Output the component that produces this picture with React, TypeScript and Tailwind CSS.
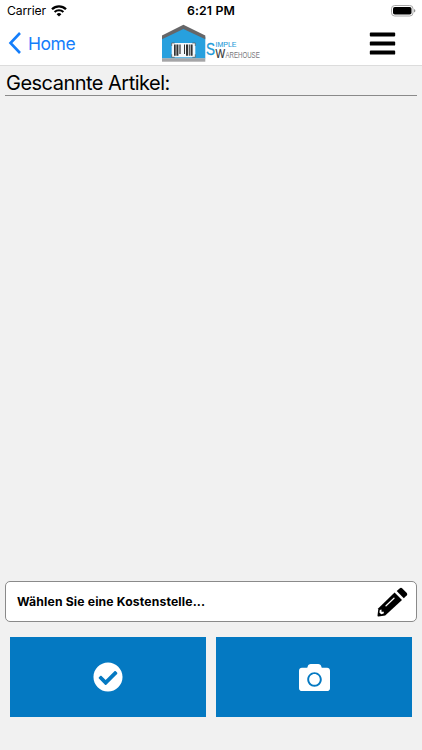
import { FaBars, FaCamera, FaCheckCircle } from "react-icons/fa";

const WifiIcon = () => (
  <svg width="16" height="12" viewBox="0 0 16 12" fill="none" stroke="#000">
    <path d="M1 4.3a10 10 0 0 1 14 0" strokeWidth="2.3" />
    <path d="M3.6 7a6.3 6.3 0 0 1 8.8 0" strokeWidth="2.1" />
    <path d="M8 11.6 5.6 9.2a3.5 3.5 0 0 1 4.8 0z" fill="#000" stroke="none" />
  </svg>
);

const BatteryIcon = () => (
  <svg width="25" height="12" viewBox="0 0 25 12">
    <rect x="0.5" y="0.5" width="21.5" height="10.5" rx="3.2" fill="#fff" stroke="#a8a8a8" />
    <rect x="2" y="2" width="18.5" height="7.5" rx="1.8" fill="#000" />
    <path d="M23.2 4v3.6c1.5-.6 1.5-3 0-3.6z" fill="#777" />
  </svg>
);

const PencilIcon = () => (
  <svg width="31" height="31" viewBox="3 3 31 31" className="mt-[2px]">
    <path
      d="M20.6 8.6 28 16 11.2 31.6 4.5 32.6Q3.4 32.7 3.5 31.6L4.4 24.3z"
      fill="#000"
    />
    <path
      d="M22.7 7 25.6 4.4Q27 3.3 28.3 4.4L32.8 8.9Q33.8 10 32.8 11.3L29.8 14.2z"
      fill="#000"
    />
    <path d="M12 21.8 20 14.2" stroke="#fff" strokeWidth="1.2" strokeLinecap="round" />
    <path d="M5.8 25.9 7.500 25.6V27.8H9.9L9.7 29.5 7.2 30.2 5.4 28.5z" fill="#fff" />
  </svg>
);

const Logo = () => (
  <svg
    width="100"
    height="40"
    viewBox="161 23 100 40"
    className="overflow-visible"
    fontFamily="'Liberation Sans', sans-serif"
  >
    <path d="M162 37 183.4 27 205.3 37V58.5H162z" fill="#27a0de" />
    <path d="M162 35.5 183.4 24.7 205.3 35.5V39.3L183.4 29 162 39.3z" fill="#666668" />
    <rect x="162" y="58.3" width="43.3" height="3.4" fill="#a5a5a7" />
    <rect x="171.7" y="43" width="23.6" height="14.3" fill="#f4f8fa" />
    <path
      d="M171.7 46v-3h3M192.3 43h3v3M195.3 54.3v3h-3M174.7 57.3h-3v-3"
      fill="none"
      stroke="#555"
      strokeWidth="0.7"
    />
    <path
      d="M174 44.4h1.7v11.4H174zM176.4 44.4h2v11.4h-2zM179.4 44.4h1.2v9.6h-1.2zM184 44.4h1v9.6h-1zM186 44.4h2.2v11.4H186zM189 44.4h.8v11.4h-.8zM190.6 44.4h2v11.4h-2z"
      fill="#333"
    />
    <text x="206" y="54.8" fontSize="17" textLength="9" lengthAdjust="spacingAndGlyphs" fill="#1d9ad8" stroke="#1d9ad8" strokeWidth="0.3">
      S
    </text>
    <text x="215.5" y="46.8" fontSize="7.4" textLength="21" lengthAdjust="spacingAndGlyphs" fill="#1d9ad8" stroke="#1d9ad8" strokeWidth="0.1">
      IMPLE
    </text>
    <text x="215.6" y="58" fontSize="13.6" textLength="9.6" lengthAdjust="spacingAndGlyphs" fill="#333" stroke="#333" strokeWidth="0.2">
      W
    </text>
    <text x="225.4" y="58" fontSize="9.6" textLength="34.4" lengthAdjust="spacingAndGlyphs" fill="#77777a">
      AREHOUSE
    </text>
  </svg>
);

const StatusBar = () => (
  <div className="grid h-[22px] grid-cols-3 items-center px-[7px]">
    <div className="flex items-center gap-[5px]">
      <span className="text-[12.2px] tracking-[-0.15px]">Carrier</span>
      <WifiIcon />
    </div>
    <span className="text-center text-[12.3px] font-semibold tracking-[0.15px]">6:21 PM</span>
    <div className="-mr-[1px] flex justify-end">
      <BatteryIcon />
    </div>
  </div>
);

const Header = () => (
  <header className="h-[66px] border-b border-[#dcdcdc] bg-white">
    <StatusBar />
    <div className="grid h-[42px] grid-cols-3 items-center">
      <a href="#" className="flex items-center gap-[6px] pl-2 text-[#147efb]">
        <svg width="14" height="24" viewBox="0 0 14 24" fill="none" stroke="currentColor" strokeWidth="2.6">
          <path d="M12 2 2.5 12 12 22" />
        </svg>
        <span className="pt-[2px] text-[17.5px] tracking-[-0.45px]">Home</span>
      </a>
      <div className="flex justify-center">
        <Logo />
      </div>
      <button type="button" aria-label="Menu" className="flex justify-end pr-[25.5px]">
        <FaBars size={29} />
      </button>
    </div>
  </header>
);

const App: React.FC = () => {
  return (
    <div className="flex h-[750px] w-[422px] flex-col bg-[#f1f1f1] font-['Inter',sans-serif] text-black">
      <Header />
      <main className="flex flex-1 flex-col px-[5px]">
        <h1 className="h-[30px] border-b border-[#8a8a8a] pl-[1px] text-[20px] leading-[34px] tracking-[-0.52px]">
          Gescannte Artikel:
        </h1>
        <div className="flex-1" />
        <div className="flex h-[41px] items-center justify-between rounded-[5px] border border-[#8a8a8a] bg-white pr-2 pl-[11px]">
          <span className="pt-[1px] text-[12.2px] font-bold tracking-[0.15px]">
            Wählen Sie eine Kostenstelle...
          </span>
          <PencilIcon />
        </div>
        <div className="mt-[15px] mb-[33px] grid h-20 grid-cols-2 gap-[10px] px-[5px] text-white">
          <button type="button" aria-label="OK" className="flex items-center justify-center bg-[#0479c2]">
            <FaCheckCircle size={30} />
          </button>
          <button type="button" aria-label="Kamera" className="flex items-center justify-center bg-[#0479c2]">
            <FaCamera size={31} />
          </button>
        </div>
      </main>
    </div>
  );
};

export default App;
